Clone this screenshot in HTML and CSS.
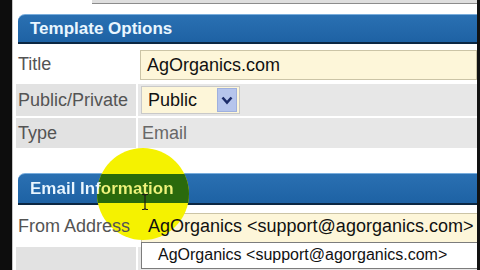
FILE: index.html
```html
<!DOCTYPE html>
<html>
<head>
<meta charset="utf-8">
<link rel="stylesheet" href="styles.css">
</head>
<body>
<div class="screen">
  <div class="edge-left"></div>
  <div class="main">
    <div class="stub"></div>
    <div class="section-head head-one"><span class="head-text">Template Options</span></div>
    <div class="rows rows-one">
      <div class="row row-title">
        <div class="label"><span class="txt">Title</span></div>
        <div class="value"><div class="input input-title"><span class="txt">AgOrganics.com</span></div></div>
      </div>
      <div class="row row-pub grey">
        <div class="label"><span class="txt">Public/Private</span></div>
        <div class="value">
          <div class="select">
            <span class="select-text">Public</span>
            <span class="select-btn">
              <svg width="12" height="9" viewBox="0 0 12 9"><polyline points="1.5,1.5 6,6.5 10.5,1.5" fill="none" stroke="#1c2c6a" stroke-width="2.6"/></svg>
            </span>
          </div>
        </div>
      </div>
      <div class="row row-type grey">
        <div class="label"><span class="txt">Type</span></div>
        <div class="value value-text"><span class="txt">Email</span></div>
      </div>
    </div>
    <div class="section-head head-two">
      <div class="head-disc"></div>
      <span class="head-text head-text-lit">Email Information</span>
    </div>
    <div class="rows rows-two">
      <div class="row row-from">
        <div class="label"><span class="txt">From Address</span></div>
        <div class="value"><div class="input input-from"><span class="txt">AgOrganics &lt;support@agorganics.com&gt;</span></div></div>
      </div>
      <div class="row row-next grey">
        <div class="label"></div>
        <div class="value"></div>
      </div>
    </div>
    <div class="dropdown">AgOrganics &lt;support@agorganics.com&gt;</div>
    <div class="highlight"></div>
    <svg class="ibeam" width="8" height="18" viewBox="0 0 8 18">
      <path d="M1 1.5 H3 L4 2.5 L5 1.5 H7 M4 2.5 V15.5 M1 16.5 H3 L4 15.5 L5 16.5 H7" fill="none" stroke="#1a1a1a" stroke-width="1.2"/>
    </svg>
  </div>
  <div class="edge-right"></div>
</div>
</body>
</html>
```

FILE: styles.css
```css
html, body {
  margin: 0;
  padding: 0;
  background: #ffffff;
}

.screen {
  width: 480px;
  height: 270px;
  display: flex;
  overflow: hidden;
  font-family: "Liberation Sans", Arial, sans-serif;
}

.edge-left {
  width: 12px;
  flex: none;
  background: #0d0d0d;
}

.edge-right {
  width: 3px;
  flex: none;
  background: #121212;
}

.main {
  flex: 1;
  position: relative;
  display: flex;
  flex-direction: column;
  border-left: 1px solid #c6c6c6;
  padding-left: 3px;
  overflow: hidden;
  background: #ffffff;
}

.main > * {
  flex-shrink: 0;
}

.stub {
  height: 3px;
  margin-left: 76px;
  background: #dedede;
  border-bottom: 1px solid #8c8c8c;
}

.section-head {
  position: relative;
  overflow: hidden;
  margin-left: 2px;
  border-top-left-radius: 7px;
  border-top: 1px solid #79addc;
  border-bottom: 2px solid #0c2742;
  background: linear-gradient(#2a70b2, #1e62a4);
  color: #e9f6ff;
  font-weight: bold;
  font-size: 17px;
  padding-left: 12px;
  white-space: nowrap;
}

.head-text {
  position: relative;
  z-index: 3;
}

.head-one {
  margin-top: 10px;
  height: 27px;
  line-height: 27px;
}

.head-two {
  margin-top: 25px;
  height: 29px;
  line-height: 29px;
}

/* green part of the highlight where it lies over the blue bar */
.head-disc {
  position: absolute;
  left: 79px;
  top: -26px;
  width: 92px;
  height: 92px;
  border-radius: 50%;
  background: #2a6a0c;
  z-index: 2;
}

/* text colour changes inside the highlight circle */
.head-text-lit {
  background: radial-gradient(circle 46px at 113px 20px, #eef27a 45.5px, #e9f6ff 46px);
  -webkit-background-clip: text;
  background-clip: text;
  color: transparent;
}

.rows {
  display: flex;
  flex-direction: column;
  gap: 2px;
  margin-top: 2px;
}

.rows > * {
  flex-shrink: 0;
}

.row {
  display: grid;
  grid-template-columns: 120px 1fr;
  column-gap: 2px;
  font-size: 18px;
}

.txt {
  position: relative;
  z-index: 2;
}

.label {
  color: #545454;
  padding-left: 2px;
  white-space: nowrap;
}

.value {
  padding-left: 3px;
  min-width: 0;
}

.grey .label {
  background: #e2e2e2;
}

.grey .value {
  background: #e7e7e7;
}

.row-title {
  height: 36px;
}
.row-title .label {
  line-height: 36px;
}

.row-pub {
  height: 32px;
}
.row-pub .label {
  line-height: 32px;
}

.row-type {
  height: 30px;
}
.row-type .label {
  line-height: 30px;
}

.value-text {
  color: #686868;
  line-height: 30px;
  padding-left: 4px;
}

.input {
  box-sizing: border-box;
  background: #fdf6d9;
  border: 1px solid #cbc4a6;
  color: #111111;
  padding-left: 6px;
  white-space: nowrap;
  overflow: hidden;
}

.input-title {
  margin-top: 4px;
  margin-left: -1px;
  height: 30px;
  line-height: 28px;
}

.select {
  box-sizing: border-box;
  margin-top: 2px;
  width: 99px;
  height: 28px;
  background: #fdf6d9;
  border: 1px solid #c9c9c9;
  display: flex;
  align-items: center;
  justify-content: space-between;
  padding-left: 6px;
  padding-right: 2px;
  color: #111111;
}

.select-text {
  line-height: 26px;
}

.select-btn {
  box-sizing: border-box;
  width: 20px;
  height: 24px;
  background: #b6c5ec;
  border: 1px solid #9fb0de;
  display: flex;
  align-items: center;
  justify-content: center;
}

.row-from {
  height: 38px;
}
.row-from .label {
  line-height: 38px;
}

.input-from {
  margin-top: 6px;
  height: 30px;
  line-height: 25px;
  margin-right: -6px;
}

.row-next {
  height: 30px;
}

.dropdown {
  position: absolute;
  left: 128px;
  top: 242px;
  right: -3px;
  height: 27px;
  box-sizing: border-box;
  background: #ffffff;
  border: 1px solid #7c7c7c;
  font-size: 16px;
  line-height: 24px;
  padding-left: 16px;
  color: #111111;
  white-space: nowrap;
}

.highlight {
  position: absolute;
  z-index: 1;
  left: 84px;
  top: 148px;
  width: 92px;
  height: 92px;
  border-radius: 50%;
  background: #f5f200;
}

.ibeam {
  position: absolute;
  z-index: 4;
  left: 128px;
  top: 193px;
}
```
